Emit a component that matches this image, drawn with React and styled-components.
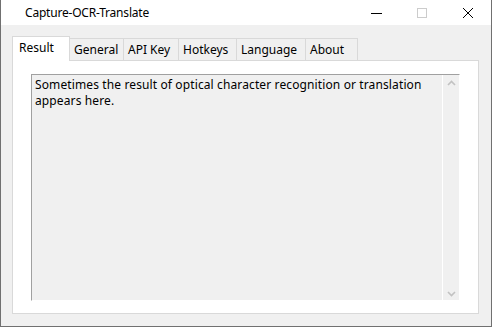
import React from "react";
import styled, { createGlobalStyle } from "styled-components";

const GlobalStyle = createGlobalStyle`
  html, body { margin: 0; padding: 0; background: #ffffff; }
  #root { width: 492px; height: 327px; }
  * { box-sizing: border-box; }
`;

const Window = styled.div`
  width: 492px;
  height: 327px;
  display: flex;
  flex-direction: column;
  border-left: 1px solid #707070;
  border-right: 1px solid #707070;
  border-bottom: 1px solid #707070;
  font-family: "Noto Sans", "Open Sans", sans-serif;
  font-size: 12px;
  color: #000;
`;

const TitleBar = styled.div`
  height: 25px;
  flex: none;
  display: flex;
  align-items: center;
  background: #ffffff;
`;

const Title = styled.div`
  flex: 1;
  padding-left: 24px;
  padding-top: 1px;
  letter-spacing: -0.2px;
  line-height: 24px;
`;

const CaptionButton = styled.div`
  width: 46px;
  height: 25px;
  display: flex;
  align-items: center;
  justify-content: center;
`;

const Client = styled.div`
  flex: 1;
  display: flex;
  flex-direction: column;
  background: #f0f0f0;
  padding: 11px 12px 12px 11px;
  min-height: 0;
`;

const TabStrip = styled.div`
  display: flex;
  align-items: flex-end;
  height: 25px;
  margin-bottom: -1px;
  position: relative;
  z-index: 1;
`;

const Tab = styled.div`
  width: ${(p) => p.$w}px;
  height: ${(p) => (p.$active ? 25 : 22)}px;
  margin-left: ${(p) => (p.$first ? 0 : -1)}px;
  margin-bottom: ${(p) => (p.$active ? 0 : 1)}px;
  background: ${(p) => (p.$active ? "#ffffff" : "#f0f0f0")};
  border: 1px solid #d9d9d9;
  border-bottom: none;
  display: flex;
  align-items: flex-start;
  padding-top: ${(p) => (p.$active ? 3 : 3)}px;
  padding-left: ${(p) => (p.$active ? 6 : 4)}px;
  position: relative;
  z-index: ${(p) => (p.$active ? 2 : 1)};
  white-space: nowrap;
  line-height: 16px;
`;

const Panel = styled.div`
  flex: 1;
  background: #ffffff;
  border: 1px solid #d9d9d9;
  padding: 13px 18px 12px 18px;
  display: flex;
  min-height: 0;
`;

const TextBox = styled.div`
  flex: 1;
  display: flex;
  background: #f0f0f0;
  border-top: 1px solid #a0a0a0;
  border-left: 1px solid #a0a0a0;
  border-right: 1px solid #ffffff;
  border-bottom: 1px solid #ffffff;
`;

const TextContent = styled.div`
  flex: 1;
  padding: 2px 3px 0 3px;
  line-height: 16px;
  letter-spacing: 0.12px;
`;

const ScrollBar = styled.div`
  width: 17px;
  border-left: 1px solid #ffffff;
  display: flex;
  flex-direction: column;
  justify-content: space-between;
  align-items: center;
  padding: 5px 0 3px 0;
`;

const tabs = [
  { label: "Result", w: 58, active: true },
  { label: "General", w: 55 },
  { label: "API Key", w: 56 },
  { label: "Hotkeys", w: 59 },
  { label: "Language", w: 70 },
  { label: "About", w: 53 },
];

const Chevron = ({ up }) => (
  <svg width="9" height="6" viewBox="0 0 9 6">
    <path
      d={up ? "M1 5 L4.5 1.5 L8 5" : "M1 1 L4.5 4.5 L8 1"}
      fill="none"
      stroke="#c2c2c2"
      strokeWidth="1.6"
    />
  </svg>
);

export default function App() {
  return (
    <>
      <GlobalStyle />
      <Window>
        <TitleBar>
          <Title>Capture-OCR-Translate</Title>
          <CaptionButton>
            <svg width="11" height="10" viewBox="0 0 11 10">
              <path d="M0 5.5 H11" stroke="#000" strokeWidth="1" />
            </svg>
          </CaptionButton>
          <CaptionButton>
            <svg width="10" height="10" viewBox="0 0 10 10">
              <rect x="0.5" y="0.5" width="9" height="9" fill="none" stroke="#cccccc" strokeWidth="1" />
            </svg>
          </CaptionButton>
          <CaptionButton>
            <svg width="10" height="10" viewBox="0 0 10 10">
              <path d="M0 0 L10 10 M10 0 L0 10" stroke="#000" strokeWidth="1" />
            </svg>
          </CaptionButton>
        </TitleBar>
        <Client>
          <TabStrip>
            {tabs.map((t, i) => (
              <Tab key={t.label} $w={t.w} $active={t.active} $first={i === 0}>
                {t.label}
              </Tab>
            ))}
          </TabStrip>
          <Panel>
            <TextBox>
              <TextContent>
                Sometimes the result of optical character recognition or translation
                <br />
                appears here.
              </TextContent>
              <ScrollBar>
                <Chevron up />
                <Chevron />
              </ScrollBar>
            </TextBox>
          </Panel>
        </Client>
      </Window>
    </>
  );
}
